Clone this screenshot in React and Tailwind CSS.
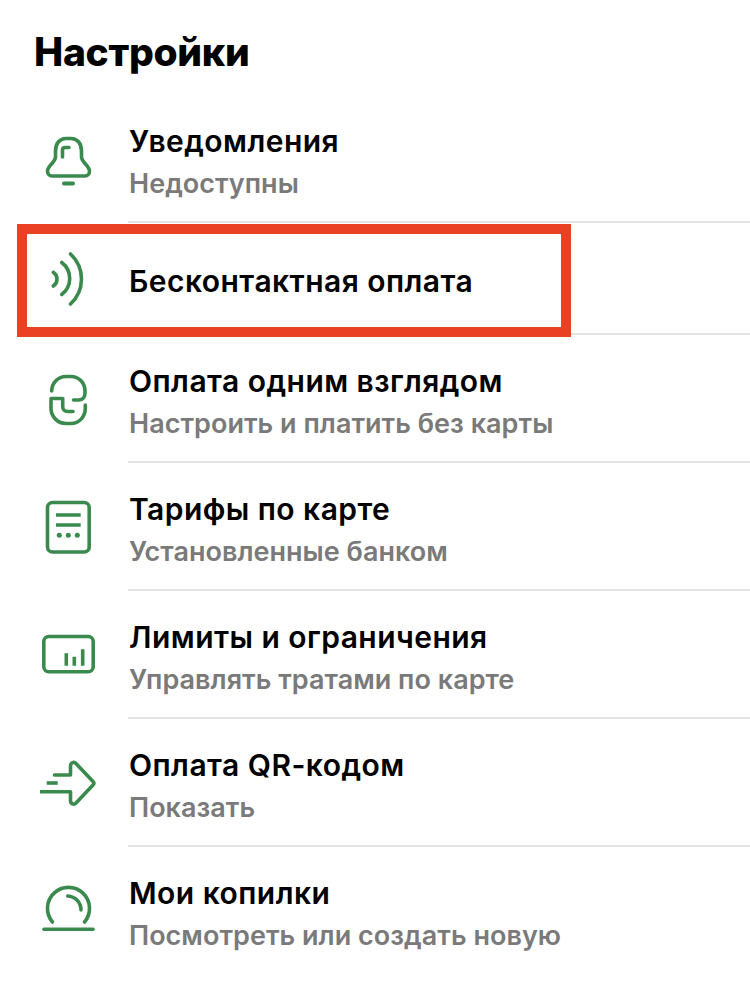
import React from "react";

const Svg = ({ children, className = "mt-[35px]" }) => (
  <svg
    viewBox="0 0 56 64"
    width="56"
    height="64"
    fill="none"
    stroke="#3a8a4e"
    strokeWidth="3.6"
    strokeLinecap="round"
    strokeLinejoin="round"
    className={className}
  >
    {children}
  </svg>
);

const BellIcon = () => (
  <Svg>
    <path d="M15.5 21 C15.5 13 20 8.5 26 8.5 H31 C37 8.5 41.5 13 41.5 21 V27 C41.5 32 49.5 36 49.5 41 C49.5 44 47.5 46 45 46 H12 C9.5 46 7.5 44 7.5 41 C7.5 36 15.5 32 15.5 27 Z" />
    <path d="M22.5 27 V20 Q22.5 17.5 25 17.5 H29" />
    <path d="M24 53.5 H33" strokeWidth="4" />
  </Svg>
);

const WavesIcon = () => (
  <Svg className="mt-[23px]">
    <path d="M30.5 8 A34 34 0 0 1 30.5 58" />
    <path d="M21.7 16.5 A20 20 0 0 1 21.7 48.5" />
    <path d="M13.3 26.3 A8.2 8.2 0 0 1 13.3 40" />
  </Svg>
);

const FaceIcon = () => (
  <Svg>
    <path d="M11.7 21 C11.7 13 18 6.5 26 6.5 H31 C39 6.5 45 13 45 21 V23 C45 27 43 30 39 30 H33.5" />
    <path d="M33 41.5 H28 C24 41.5 22.7 40 22.7 36 V28.5 H11 V38 C11 47 18 53.5 26 53.5 H31 C39 53.5 45.3 47 45.3 38 V35" />
  </Svg>
);

const DocIcon = () => (
  <Svg>
    <rect x="7.5" y="4.5" width="41.7" height="49.5" rx="5" />
    <path d="M16 17 H40.7 M16 27 H40.7" strokeLinecap="butt" />
    <circle cx="19.3" cy="37.3" r="2.5" fill="#3a8a4e" stroke="none" />
    <circle cx="28.3" cy="37.3" r="2.5" fill="#3a8a4e" stroke="none" />
    <circle cx="37.3" cy="37.3" r="2.5" fill="#3a8a4e" stroke="none" />
  </Svg>
);

const LimitsIcon = () => (
  <Svg>
    <rect x="3.8" y="10.5" width="49.4" height="35.3" rx="5" />
    <path d="M26.3 27.3 V39.7 M34.3 30.7 V39.7 M42.7 23.3 V39.7" strokeLinecap="butt" />
  </Svg>
);

const ArrowIcon = () => (
  <Svg>
    <path d="M14.5 21 H30.5 V12 C30.5 8.5 34 7.5 36 9.5 L53 27.5 C54 28.5 54 30 53 31 L36 49 C34 51 30.5 50 30.5 46.5 V37.7 H0" />
    <path d="M6.7 29 H17.7" strokeLinecap="butt" />
  </Svg>
);

const PiggyIcon = () => (
  <Svg>
    <path d="M12.5 40 A21 21 0 1 1 44.5 40" />
    <path d="M27.7 14 A14 14 0 0 1 41 28" />
    <path d="M4 47.3 H53" />
  </Svg>
);

const items = [
  { icon: BellIcon, title: "Уведомления", sub: "Недоступны" },
  { icon: WavesIcon, title: "Бесконтактная оплата" },
  { icon: FaceIcon, title: "Оплата одним взглядом", sub: "Настроить и платить без карты" },
  { icon: DocIcon, title: "Тарифы по карте", sub: "Установленные банком" },
  { icon: LimitsIcon, title: "Лимиты и ограничения", sub: "Управлять тратами по карте" },
  { icon: ArrowIcon, title: "Оплата QR-кодом", sub: "Показать" },
  { icon: PiggyIcon, title: "Мои копилки", sub: "Посмотреть или создать новую", last: true },
];

export default function App() {
  return (
    <div className="relative w-[750px] h-[992px] bg-white overflow-hidden font-['Inter',sans-serif]">
      <h1 className="h-[95px] pl-[34px] pt-[29px] text-[39px] leading-[46px] font-extrabold tracking-[-0.3px] text-black">
        Настройки
      </h1>

      {items.map((item) => {
        const Icon = item.icon;
        return (
          <div key={item.title} className="flex">
            <div className="w-[128px] shrink-0 pl-[40px]">
              <Icon />
            </div>
            <div
              className={
                item.sub
                  ? item.last
                    ? "flex-1 h-[128px] pt-[28px]"
                    : "flex-1 h-[128px] pt-[28px] border-b-2 border-[#e2e2e2]"
                  : "flex-1 h-[112px] pt-[40px] border-b-2 border-[#e2e2e2]"
              }
            >
              <div className="pl-[1px] text-[30px] leading-[36px] font-semibold tracking-[0.45px] text-black">
                {item.title}
              </div>
              {item.sub && (
                <div className="mt-[7px] pl-[1px] text-[27px] leading-[36px] font-semibold tracking-[0.02px] text-[#7a7a7a]">
                  {item.sub}
                </div>
              )}
            </div>
          </div>
        );
      })}

      <div className="absolute left-[17px] top-[224px] w-[554px] h-[113px] border-[10px] border-[#ea4125]" />
    </div>
  );
}
